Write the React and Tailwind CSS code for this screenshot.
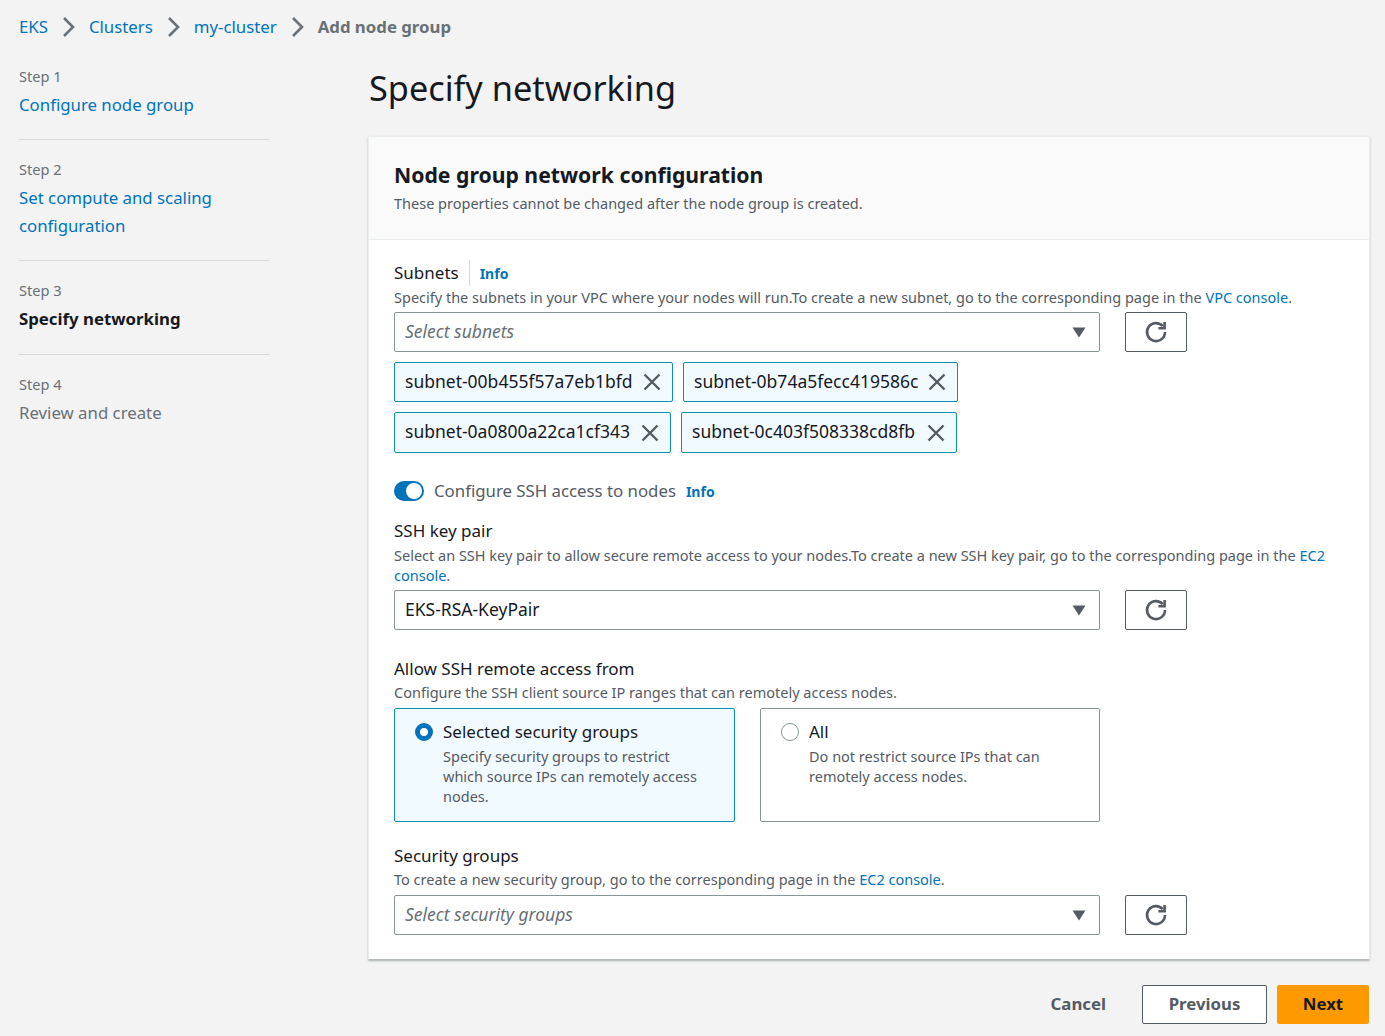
import { Fragment } from "react"

function Chevron() {
  return (
    <svg viewBox="0 0 16 24" className="w-[16px] h-[24px] mx-[12.5px] text-[#687078]" fill="none" stroke="currentColor" strokeWidth="2.6">
      <path d="M4 3l9 9-9 9" />
    </svg>
  )
}

function Caret() {
  return (
    <svg viewBox="0 0 14 11" className="w-[14px] h-[11px] text-[#545b64]" fill="currentColor">
      <path d="M0.5 0.5h13l-6.5 10z" />
    </svg>
  )
}

function CloseIcon() {
  return (
    <svg viewBox="0 0 18 18" className="w-[18px] h-[18px] text-[#545b64] shrink-0" fill="none" stroke="currentColor" strokeWidth="2.4">
      <path d="M1.5 1.5l15 15M16.5 1.5l-15 15" />
    </svg>
  )
}

function RefreshButton() {
  return (
    <button className="w-[62px] h-[40px] ml-[25px] flex items-center justify-center bg-white border border-[#545b64] rounded-[2px]">
      <svg viewBox="0 0 24 24" className="w-[24px] h-[24px] text-[#545b64]" fill="none" stroke="currentColor" strokeWidth="2.6">
        <path d="M18.8 6.2A9 9 0 1 0 21 12" />
        <path d="M20.6 2v6.2h-6.2" />
      </svg>
    </button>
  )
}

function SelectRow({ value, placeholder }) {
  return (
    <div className="flex">
      <div className="w-[706px] h-[40px] flex items-center justify-between pl-[10px] pr-[13px] bg-white border border-[#879596] rounded-[2px] text-[17.5px]">
        <span className={`pb-[2px] ${placeholder ? "italic text-[#687078]" : "text-[#16191f]"}`}>{value}</span>
        <Caret />
      </div>
      <RefreshButton />
    </div>
  )
}

function Token({ label, className }) {
  return (
    <div className={`flex items-center justify-between pl-[10px] pr-[11px] bg-[#f1faff] border border-[#0e8fad] rounded-[2px] text-[17.5px] text-[#16191f] ${className}`}>
      <span className="pb-[2px]">{label}</span>
      <CloseIcon />
    </div>
  )
}

function Info() {
  return <a className="text-[14px] font-bold text-[#0073bb]">Info</a>
}

function Label({ children }) {
  return <div className="text-[17px] text-[#16191f] leading-[24px]">{children}</div>
}

function Hint({ children }) {
  return <div className="text-[14.5px] leading-[20px] text-[#545b64]">{children}</div>
}

function A({ children }) {
  return <a className="text-[#0073bb]">{children}</a>
}

const steps = [
  { step: "Step 1", title: ["Configure node group"], kind: "link" },
  { step: "Step 2", title: ["Set compute and scaling", "configuration"], kind: "link" },
  { step: "Step 3", title: ["Specify networking"], kind: "current" },
  { step: "Step 4", title: ["Review and create"], kind: "muted" },
]

export default function App() {
  return (
    <div className="min-h-[1036px] bg-[#f3f3f3] font-['Noto_Sans','Open_Sans',sans-serif] text-[16.8px] overflow-hidden">
      <nav className="h-[54px] mb-[13px] flex items-center pl-[19px]">
        <a className="text-[#0073bb]">EKS</a>
        <Chevron />
        <a className="text-[#0073bb]">Clusters</a>
        <Chevron />
        <a className="text-[#0073bb]">my-cluster</a>
        <Chevron />
        <span className="font-bold text-[#687078]">Add node group</span>
      </nav>

      <div className="flex">
        <aside className="w-[250px] ml-[19px] shrink-0">
          {steps.map((s, i) => (
            <Fragment key={s.step}>
              {i > 0 && <div className="h-px bg-[#d5dbdb] mt-[20.2px] mb-[20px]" />}
              <div className="text-[14.6px] leading-[20px] text-[#687078] mt-[-1px]">{s.step}</div>
              <div
                className={`mt-[5px] leading-[28px] ${
                  s.kind === "link" ? "text-[#0073bb]" : s.kind === "current" ? "font-bold text-[#16191f]" : "text-[#687078]"
                }`}
              >
                {s.title.map((t) => (
                  <div key={t}>{t}</div>
                ))}
              </div>
            </Fragment>
          ))}
        </aside>

        <main className="w-[1002px] ml-[99px] -mt-[1px]">
          <h1 className="ml-[1px] text-[34.3px] leading-[44px] text-[#16191f]">Specify networking</h1>

          <section className="mt-[26px] bg-white border border-[#eaeded] border-b-[#b7bcbd] shadow-[0_1px_2px_rgba(0,28,36,0.3)] rounded-[1px]">
            <header className="h-[103px] bg-[#fafafa] border-b border-[#eaeded] pl-[25px] pt-[23px]">
              <h2 className="text-[21.2px] leading-[30px] font-bold text-[#16191f]">Node group network configuration</h2>
              <div className="mt-[3px]">
                <Hint>These properties cannot be changed after the node group is created.</Hint>
              </div>
            </header>

            <div className="pl-[25px] pr-[25px] pt-[21px] pb-[24px]">
              <div className="flex items-center h-[24px]">
                <span className="text-[17px] text-[#16191f] pr-[10px] border-r border-[#d5dbdb] mr-[10px]">Subnets</span>
                <Info />
              </div>
              <div className="mt-[2px] mb-[5px]">
                <Hint>
                  Specify the subnets in your VPC where your nodes will run.To create a new subnet, go to the corresponding page in the <A>VPC console</A>.
                </Hint>
              </div>
              <SelectRow value="Select subnets" placeholder />

              <div className="flex gap-[10px] mt-[10px]">
                <Token label="subnet-00b455f57a7eb1bfd" className="w-[279px] h-[40px]" />
                <Token label="subnet-0b74a5fecc419586c" className="w-[275px] h-[40px]" />
              </div>
              <div className="flex gap-[10px] mt-[10px]">
                <Token label="subnet-0a0800a22ca1cf343" className="w-[277px] h-[41px]" />
                <Token label="subnet-0c403f508338cd8fb" className="w-[276px] h-[41px]" />
              </div>

              <div className="flex items-center h-[24px] mt-[26px]">
                <div className="w-[30px] h-[20px] rounded-full bg-[#0073bb] relative mr-[10px]">
                  <div className="absolute right-[2px] top-[2px] w-[16px] h-[16px] rounded-full bg-white" />
                </div>
                <span className="text-[#545b64] mr-[10px]">Configure SSH access to nodes</span>
                <Info />
              </div>

              <div className="mt-[16px]">
                <Label>SSH key pair</Label>
              </div>
              <div className="mt-[2px] mb-[5px]">
                <Hint>
                  Select an SSH key pair to allow secure remote access to your nodes.To create a new SSH key pair, go to the corresponding page in the <A>EC2</A> <A>console</A>.
                </Hint>
              </div>
              <SelectRow value="EKS-RSA-KeyPair" />

              <div className="mt-[27px]">
                <Label>Allow SSH remote access from</Label>
              </div>
              <div className="mt-[1px] mb-[6px]">
                <Hint>Configure the SSH client source IP ranges that can remotely access nodes.</Hint>
              </div>

              <div className="flex gap-[25px]">
                <div className="w-[341px] h-[114px] flex bg-[#f1faff] border border-[#0e8fad] rounded-[2px] pl-[20px] pt-[11px]">
                  <div className="w-[18px] h-[18px] mt-[3px] rounded-full border-[5px] border-[#0073bb] bg-white shrink-0" />
                  <div className="ml-[10px]">
                    <Label>Selected security groups</Label>
                    <div className="w-[262px] mt-[2px]">
                      <Hint>Specify security groups to restrict which source IPs can remotely access nodes.</Hint>
                    </div>
                  </div>
                </div>
                <div className="w-[340px] h-[114px] flex bg-white border border-[#879596] rounded-[2px] pl-[20px] pt-[11px]">
                  <div className="w-[18px] h-[18px] mt-[3px] rounded-full border border-[#879596] bg-white shrink-0" />
                  <div className="ml-[10px]">
                    <Label>All</Label>
                    <div className="w-[262px] mt-[2px]">
                      <Hint>Do not restrict source IPs that can remotely access nodes.</Hint>
                    </div>
                  </div>
                </div>
              </div>

              <div className="mt-[22px]">
                <Label>Security groups</Label>
              </div>
              <div className="mt-[1px] mb-[6px]">
                <Hint>
                  To create a new security group, go to the corresponding page in the <A>EC2 console</A>.
                </Hint>
              </div>
              <SelectRow value="Select security groups" placeholder />
            </div>
          </section>

          <div className="flex items-center justify-end mt-[25px] pr-[1px]">
            <a className="font-bold text-[#545b64] mr-[36px] pb-[2px]">Cancel</a>
            <button className="w-[125px] h-[39px] mr-[10px] pb-[2px] bg-white border border-[#545b64] rounded-[2px] font-bold text-[#545b64]">Previous</button>
            <button className="w-[92px] h-[39px] pb-[2px] bg-[#ff9900] rounded-[2px] font-bold text-[#16191f]">Next</button>
          </div>
        </main>
      </div>
    </div>
  )
}
